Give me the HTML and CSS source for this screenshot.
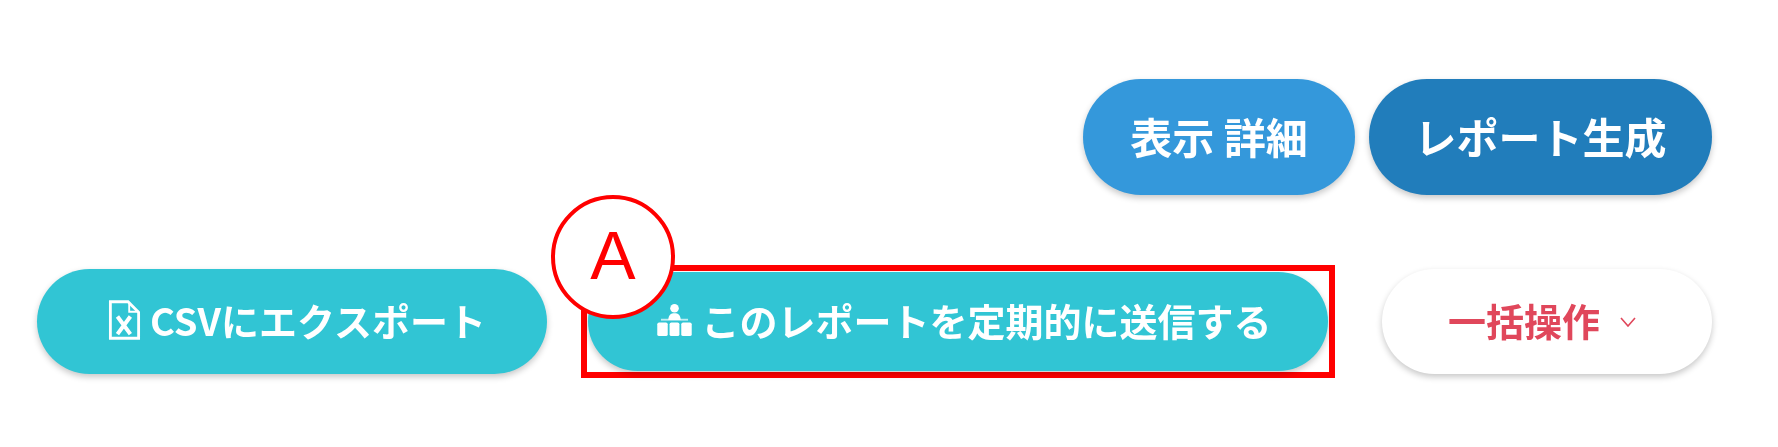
FILE: index.html
```html
<!DOCTYPE html>
<html lang="ja">

<head>
  <meta charset="UTF-8">
  <meta name="viewport" content="width=device-width, initial-scale=1.0">
  <title>レポート</title>
  <link rel="stylesheet" href="styles.css">
</head>

<body>
  <div class="toolbar">
    <div class="row row-top">
      <button class="btn btn-blue btn-detail">表示 詳細</button>
      <button class="btn btn-navy btn-report">レポート生成</button>
    </div>
    <div class="row row-bottom">
      <button class="btn btn-teal btn-csv">
        <svg class="icon icon-file" viewBox="0 0 28 34" fill="none" stroke="#fff" stroke-width="2.4">
          <path d="M2 1.5h15l9 9v22H2z" />
          <path d="M18 2v8h8" stroke-width="1.6" />
          <path d="M8 14l11 15M19 14L8 29" stroke-width="3.4" />
        </svg>
        CSVにエクスポート
      </button>
      <div class="marked">
        <button class="btn btn-teal btn-send">
          <svg class="icon icon-tree" viewBox="0 0 28 26" fill="#fff">
            <circle cx="14" cy="3.5" r="3.5" />
            <path d="M9 13c0-4 2-5.500 5-5.500s5 1.500 5 5.500z" />
            <rect x="3" y="12" width="22" height="1.500" opacity=".7" />
            <rect x="0" y="15" width="8.500" height="11" rx="1.500" />
            <rect x="10" y="15" width="8" height="11" rx="1.500" />
            <rect x="19.500" y="15" width="8.500" height="11" rx="1.500" />
          </svg>
          このレポートを定期的に送信する
        </button>
        <span class="marker">A</span>
      </div>
      <button class="btn btn-white btn-bulk">
        一括操作
        <svg class="icon icon-chevron" viewBox="0 0 16 10" fill="none" stroke="#e0475b" stroke-width="1.6">
          <path d="M1 1l7 8 7-8" />
        </svg>
      </button>
    </div>
  </div>
</body>

</html>
```

FILE: styles.css
```css
* {
  box-sizing: border-box;
}

body {
  margin: 0;
  height: 447px;
  background-color: #fff;
  font-family: "Noto Sans CJK JP", "Noto Sans", sans-serif;
  overflow: hidden;
}

.toolbar {
  padding: 79px 66px 0 37px;
}

.row {
  display: flex;
  align-items: center;
}

.row-top {
  justify-content: flex-end;
  gap: 14px;
}

.row-bottom {
  margin-top: 74px;
}

.btn {
  display: flex;
  align-items: center;
  justify-content: center;
  border: none;
  border-radius: 60px;
  padding: 0 0 4px;
  font-family: inherit;
  font-size: 38px;
  font-weight: 700;
  color: #fff;
  white-space: nowrap;
  box-shadow: 0 3px 6px rgba(0, 0, 0, .22);
  filter: blur(.6px);
}

.btn-blue {
  background-color: #3498db;
}

.btn-navy {
  background-color: #217dbb;
}

.btn-teal {
  background-color: #31c5d4;
}

.btn-white {
  background-color: #fff;
  color: #e0475b;
}

.btn-detail {
  width: 272px;
  height: 116px;
  font-size: 42px;
}

.btn-report {
  width: 343px;
  height: 116px;
  font-size: 42px;
}

.btn-csv {
  width: 510px;
  height: 105px;
  gap: 9px;
  padding-left: 10px;
}

.btn-send {
  width: 740px;
  height: 99px;
  gap: 6px;
  padding-left: 10px;
}

.btn-bulk {
  width: 330px;
  height: 105px;
  gap: 20px;
  padding-right: 10px;
  margin-left: auto;
}

.marked {
  position: relative;
  margin-left: 41px;
  outline: 6px solid #f00;
  outline-offset: 1px;
}

.marker {
  position: absolute;
  left: -37px;
  top: -77px;
  width: 124px;
  height: 124px;
  display: flex;
  align-items: center;
  justify-content: center;
  border: 4px solid #f00;
  border-radius: 50%;
  padding-bottom: 4px;
  background-color: #fff;
  color: #f00;
  font-family: "Liberation Sans", sans-serif;
  font-size: 68px;
}

.icon {
  flex: none;
}

.icon-file {
  width: 33px;
  height: 40px;
}

.icon-tree {
  width: 41px;
  height: 32px;
}

.icon-chevron {
  width: 16px;
  height: 10px;
  margin-top: 4px;
}
```
